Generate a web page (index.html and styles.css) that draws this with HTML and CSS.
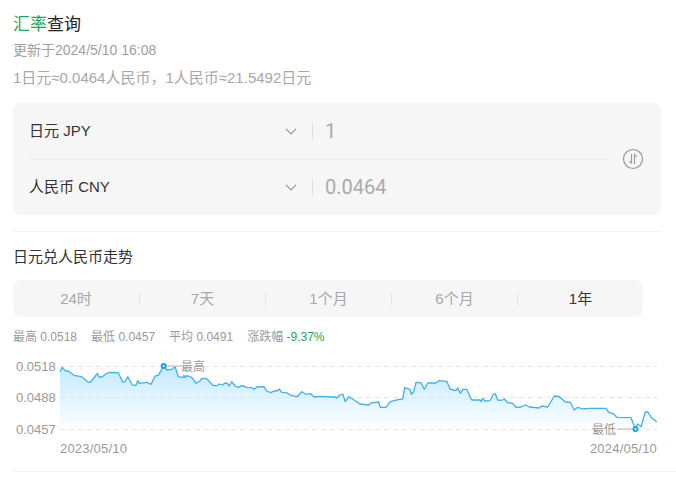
FILE: index.html
```html
<!DOCTYPE html>
<html lang="zh-CN">
<head>
<meta charset="utf-8">
<title>汇率查询</title>
<link rel="stylesheet" href="styles.css">
</head>
<body>
<main class="page">
  <h1 class="title"><span class="accent">汇率</span>查询</h1>
  <p class="updated">更新于2024/5/10 16:08</p>
  <p class="rate">1日元≈0.0464人民币，1人民币≈21.5492日元</p>

  <section class="converter">
    <div class="rows">
      <div class="row">
        <span class="currency">日元 JPY</span>
        <svg class="chev" width="12" height="7" viewBox="0 0 12 7"><path d="M1 1l5 5 5-5" fill="none" stroke="#999" stroke-width="1.1"/></svg>
        <span class="amount">1</span>
      </div>
      <div class="row row-second">
        <span class="currency">人民币 CNY</span>
        <svg class="chev" width="12" height="7" viewBox="0 0 12 7"><path d="M1 1l5 5 5-5" fill="none" stroke="#999" stroke-width="1.1"/></svg>
        <span class="amount">0.0464</span>
      </div>
    </div>
    <svg class="swap" width="22" height="22" viewBox="0 0 22 22" fill="none" stroke="#999">
      <circle cx="11" cy="11" r="9.5" stroke-width="1.2"/>
      <path d="M9.5 6v9.5M7.3 13l2.2 2.5M12.5 16V6.500l2.200 2.500" stroke-width="1.1"/>
    </svg>
  </section>

  <hr class="rule rule-top">

  <h2 class="subtitle">日元兑人民币走势</h2>

  <nav class="tabs">
    <span class="tab">24时</span>
    <span class="tab">7天</span>
    <span class="tab">1个月</span>
    <span class="tab">6个月</span>
    <span class="tab tab-active">1年</span>
  </nav>

  <p class="stats">
    <span>最高 0.0518</span>
    <span>最低 0.0457</span>
    <span>平均 0.0491</span>
    <span>涨跌幅 <em class="change">-9.37%</em></span>
  </p>

  <svg class="chart" width="663" height="106" viewBox="13 350 663 106">
    <defs>
      <linearGradient id="area" x1="0" y1="0" x2="0" y2="1">
        <stop offset="0" stop-color="#c4eaff"/>
        <stop offset="1" stop-color="#c4eaff" stop-opacity="0"/>
      </linearGradient>
    </defs>
    <g class="grid">
      <line x1="60" y1="366.500" x2="657" y2="366.500"/>
      <line x1="60" y1="397.500" x2="657" y2="397.500"/>
      <line x1="60" y1="429.500" x2="657" y2="429.500"/>
    </g>
    <path fill="url(#area)" d="M60 371.700L62.300 367.300 65 370.700 68.300 371 74 375.300 81.700 376.700 88.300 382.300 90.700 382 97.300 373.300 99 377 102 377 106.700 373.300 110 372.300 118.300 372.700 122.700 382 125 381.700 127.700 376.700 132.300 385 136 385.300 137.700 380.700 139.300 383.300 146.700 382.300 151 384.300 155 376 158.300 375.300 163.700 366 166.700 370 171.700 369.300 175 366.700 178.300 376.700 182.700 377.700 184 375.300 185.300 377.700 186.700 375.700 191.700 377.300 196 383.300 200 381 201.700 378.300 206.700 378.700 213.300 385.700 216.700 385.700 219.300 384 222.700 385 225 383 227.300 383.300 229.300 386 231.700 381.700 235 386 238.300 387.300 242.300 385.700 246.700 387.300 251.700 387.700 254 389.300 256.700 387 264 386.700 266.700 391 270.700 392.700 275 390.700 277 391 279.300 389 281.700 392.300 286.700 392.700 290.700 395.300 297.300 396.700 301.700 391.700 306 394.300 310.700 393.700 314 397 320 396.300 335 397 336.700 398.300 339 395.700 342.700 394 345.300 401.700 348.700 396.700 352.700 399 360 404 368.700 405 372 402.300 375 402.700 378.700 402 380.300 407.300 386 407.300 390.300 401.700 394.300 400.700 398 399.700 402.700 399 404.700 387.700 410 389.300 411.300 394.300 413.700 391.700 416 382.300 421 382.700 424.300 389.300 427.700 383 436 383 438.700 380.700 446.700 381.300 450 389 456 390.700 457.700 387.700 460.300 393.300 462.700 389.300 466.700 389.300 471.700 400 480.300 400 481.300 401.700 482.700 398.300 485 401 490 400.700 493.300 394.300 495.300 393.700 497.700 400 502 400.300 504.300 399 507.700 402.700 512.700 403.300 516 407.300 521 407 525.300 405 529.300 407 539.300 408 541.700 406 547.700 407 554.300 396 559.300 396.700 565.300 402 570.300 402.300 574.300 410 577.700 407.300 582.700 409 589 408.300 606 408.300 608.700 412.300 612.700 413.300 617 417.300 631 417.700 635 428.300 637.700 424 641 426.700 645.300 412 647.700 412 652 418.300 656.700 421.700V430H60Z"/>
    <path class="line" d="M60 371.700L62.300 367.300 65 370.700 68.300 371 74 375.300 81.700 376.700 88.300 382.300 90.700 382 97.300 373.300 99 377 102 377 106.700 373.300 110 372.300 118.300 372.700 122.700 382 125 381.700 127.700 376.700 132.300 385 136 385.300 137.700 380.700 139.300 383.300 146.700 382.300 151 384.300 155 376 158.300 375.300 163.700 366 166.700 370 171.700 369.300 175 366.700 178.300 376.700 182.700 377.700 184 375.300 185.300 377.700 186.700 375.700 191.700 377.300 196 383.300 200 381 201.700 378.300 206.700 378.700 213.300 385.700 216.700 385.700 219.300 384 222.700 385 225 383 227.300 383.300 229.300 386 231.700 381.700 235 386 238.300 387.300 242.300 385.700 246.700 387.300 251.700 387.700 254 389.300 256.700 387 264 386.700 266.700 391 270.700 392.700 275 390.700 277 391 279.300 389 281.700 392.300 286.700 392.700 290.700 395.300 297.300 396.700 301.700 391.700 306 394.300 310.700 393.700 314 397 320 396.300 335 397 336.700 398.300 339 395.700 342.700 394 345.300 401.700 348.700 396.700 352.700 399 360 404 368.700 405 372 402.300 375 402.700 378.700 402 380.300 407.300 386 407.300 390.300 401.700 394.300 400.700 398 399.700 402.700 399 404.700 387.700 410 389.300 411.300 394.300 413.700 391.700 416 382.300 421 382.700 424.300 389.300 427.700 383 436 383 438.700 380.700 446.700 381.300 450 389 456 390.700 457.700 387.700 460.300 393.300 462.700 389.300 466.700 389.300 471.700 400 480.300 400 481.300 401.700 482.700 398.300 485 401 490 400.700 493.300 394.300 495.300 393.700 497.700 400 502 400.300 504.300 399 507.700 402.700 512.700 403.300 516 407.300 521 407 525.300 405 529.300 407 539.300 408 541.700 406 547.700 407 554.300 396 559.300 396.700 565.300 402 570.300 402.300 574.300 410 577.700 407.300 582.700 409 589 408.300 606 408.300 608.700 412.300 612.700 413.300 617 417.300 631 417.700 635 428.300 637.700 424 641 426.700 645.300 412 647.700 412 652 418.300 656.700 421.700"/>
    <line class="leader" x1="164" y1="366" x2="181" y2="366"/>
    <line class="leader" x1="617" y1="429" x2="635" y2="429"/>
    <circle class="dot" cx="163.700" cy="366" r="2"/>
    <circle class="dot" cx="635.500" cy="429" r="2"/>
    <g class="labels">
      <text x="16" y="371">0.0518</text>
      <text x="16" y="401.500">0.0488</text>
      <text x="16" y="433.500">0.0457</text>
      <text class="mark" x="181" y="371">最高</text>
      <text class="mark" x="592" y="434">最低</text>
      <text class="date" x="60" y="453">2023/05/10</text>
      <text class="date" x="657" y="453" text-anchor="end">2024/05/10</text>
    </g>
  </svg>

  <hr class="rule rule-bottom">
</main>
</body>
</html>
```

FILE: styles.css
```css
* { box-sizing: border-box; }
html, body { margin: 0; background: #fff; }
body {
  font-family: "Liberation Sans", "Noto Sans CJK SC", sans-serif;
  color: #999;
}
.page { padding: 13px 0 0 13px; }
.title {
  margin: 0;
  font-size: 17px;
  font-weight: 400;
  line-height: 24px;
  color: #222;
}
.accent { color: #1fa463; }
.updated {
  margin: 3px 0 0;
  font-size: 14px;
  line-height: 20px;
  color: #a0a0a0;
}
.rate {
  margin: 7px 0 0;
  font-size: 15px;
  line-height: 22px;
  color: #a8a8a8;
}
.converter {
  display: flex;
  align-items: center;
  width: 648px;
  height: 112px;
  margin-top: 14px;
  padding-left: 16px;
  padding-right: 17px;
  background: #f6f6f6;
  border-radius: 8px;
}
.rows { flex: 1; }
.row {
  display: flex;
  align-items: center;
  height: 56px;
}
.row-second { border-top: 1px solid #ebebeb; padding-bottom: 1px; }
.currency {
  width: 256px;
  padding-bottom: 3px;
  font-size: 15px;
  color: #333;
}
.chev { margin-right: 15px; }
.amount {
  height: 16px;
  padding-left: 12px;
  border-left: 1px solid #dedede;
  font-family: Roboto, "Liberation Sans", sans-serif;
  font-size: 20px;
  line-height: 16px;
  color: #aaa;
}
.swap { margin-left: 15px; }
.rule { margin: 0; border: 0; height: 1px; background: #f2f2f2; }
.rule-top { width: 648px; margin-top: 16px; }
.rule-bottom { margin-top: 15px; }
.subtitle {
  margin: 15px 0 0;
  font-size: 15px;
  font-weight: 400;
  line-height: 20px;
  color: #333;
}
.tabs {
  display: flex;
  align-items: center;
  width: 630px;
  height: 37px;
  margin-top: 13px;
  background: #f6f6f6;
  border-radius: 8px;
}
.tab {
  flex: 0 0 126px;
  height: 12px;
  font-size: 15px;
  line-height: 12px;
  text-align: center;
  color: #a8a8a8;
  border-left: 1px solid #e4e4e4;
}
.tab:first-child { border-left: 0; }
.tab-active { color: #333; }
.stats {
  display: flex;
  gap: 14px;
  margin: 11px 0 0;
  font-size: 12px;
  line-height: 18px;
  color: #999;
}
.change { font-style: normal; color: #1fa463; }
.chart { display: block; margin-top: 4px; }
.grid line { stroke: #e4e4e4; stroke-dasharray: 5 4; }
.line { fill: none; stroke: #3fb1ec; stroke-width: 1.3; stroke-linejoin: round; }
.leader { stroke: #bbb; }
.dot { fill: #fff; stroke: #1ea0e8; stroke-width: 2; }
.labels text { font-size: 13px; fill: #999; }
.labels .mark { font-size: 12px; }
.labels .date { letter-spacing: 0.2px; }
```
